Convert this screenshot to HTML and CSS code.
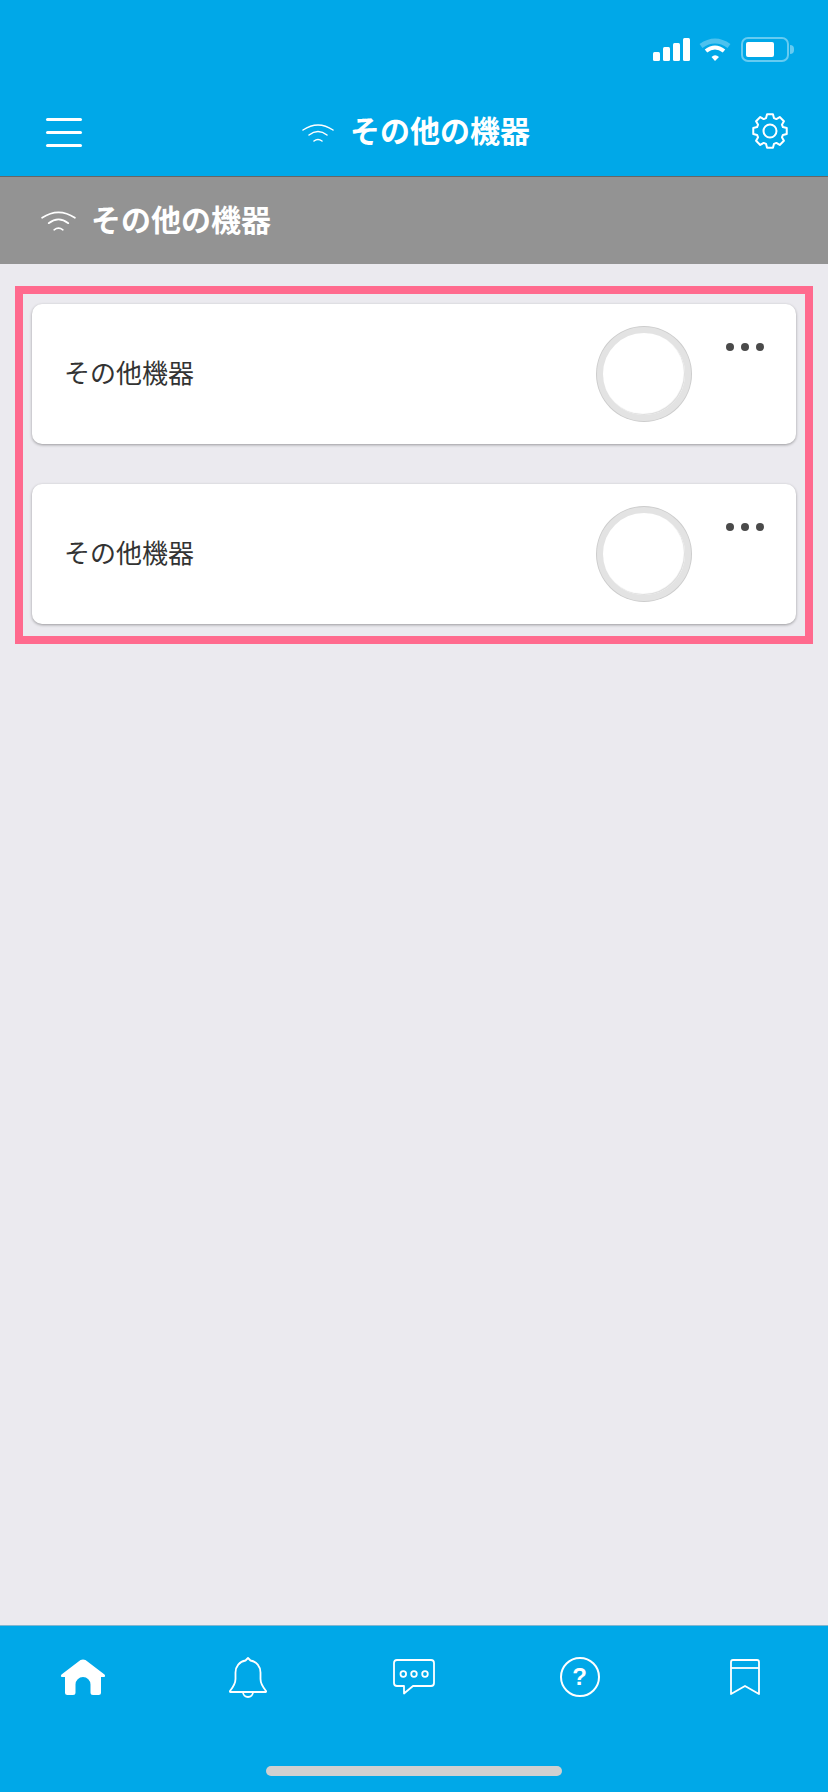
FILE: index.html
```html
<!DOCTYPE html>
<html lang="ja">
<head>
    <meta charset="UTF-8">
    <title>その他の機器</title>
    <link rel="stylesheet" href="styles.css">
</head>
<body>
    <header class="topbar">
        <div class="status">
            <svg class="signal" width="37" height="23" viewBox="0 0 37 23">
                <rect x="0" y="14" width="7" height="9" rx="1.5"/>
                <rect x="10" y="9" width="7" height="14" rx="1.5"/>
                <rect x="20" y="5" width="7" height="18" rx="1.5"/>
                <rect x="30" y="0" width="7" height="23" rx="1.5"/>
            </svg>
            <svg class="wifi-status" width="32" height="24" viewBox="0 0 32 24">
                <path class="wifi-faint" d="M2 9 Q16 -1 30 9"/>
                <path class="wifi-mid" d="M7 14 Q16 7 25 14"/>
                <path class="wifi-tip" d="M12.5 20 Q16 16.500 20 20 L16 24 Z"/>
            </svg>
            <div class="battery">
                <div class="battery-body"><div class="battery-fill"></div></div>
                <div class="battery-cap"></div>
            </div>
        </div>
        <nav class="nav">
            <div class="burger"><span></span><span></span><span></span></div>
            <div class="nav-title">
                <svg class="wifi-line" width="32" height="19" viewBox="0 0 32 19">
                    <path d="M1 7 Q16 -3 31 7"/>
                    <path d="M7 12 Q16 5 25 12"/>
                    <path d="M12 18 Q16 15 20 18"/>
                </svg>
                <h1>その他の機器</h1>
            </div>
            <svg class="gear" width="36" height="36" viewBox="-18 -18 36 36">
                <polygon points="-3.95,-12.91 -2.95,-16.74 2.95,-16.74 3.95,-12.91 6.34,-11.92 9.75,-13.92 13.92,-9.75 11.92,-6.34 12.91,-3.95 16.74,-2.95 16.74,2.95 12.91,3.95 11.92,6.34 13.92,9.75 9.75,13.92 6.34,11.92 3.95,12.91 2.95,16.74 -2.95,16.74 -3.95,12.91 -6.34,11.92 -9.75,13.92 -13.92,9.75 -11.92,6.34 -12.91,3.95 -16.74,2.95 -16.74,-2.95 -12.91,-3.95 -11.92,-6.34 -13.92,-9.75 -9.75,-13.92 -6.34,-11.92"/>
                <circle r="6.5"/>
            </svg>
        </nav>
    </header>

    <div class="subbar">
        <svg class="wifi-line" width="35" height="21" viewBox="0 0 32 19">
            <path d="M1 7 Q16 -3 31 7"/>
            <path d="M7 12 Q16 5 25 12"/>
            <path d="M12 18 Q16 15 20 18"/>
        </svg>
        <h2>その他の機器</h2>
    </div>

    <main class="content">
        <div class="highlight">
            <div class="card">
                <p class="card-name">その他機器</p>
                <div class="ring"></div>
                <div class="dots"><span></span><span></span><span></span></div>
            </div>
            <div class="card">
                <p class="card-name">その他機器</p>
                <div class="ring"></div>
                <div class="dots"><span></span><span></span><span></span></div>
            </div>
        </div>
    </main>

    <footer class="tabbar">
        <div class="tabs">
            <svg class="tab-fill" width="46" height="37" viewBox="0 0 46 37">
                <path d="M20.500 1 Q23 0 25.500 1 L44.500 15.500 Q46 17.500 44 18 H41 V33.500 Q41 36 38.500 36 H33 Q30.500 36 30.500 33.500 V25.500 A7.500 7.500 0 0 0 15.500 25.500 V33.500 Q15.500 36 13 36 H7.500 Q5 36 5 33.500 V18 H2 Q0 17.500 1.500 15.500 Z"/>
            </svg>
            <svg class="tab-line" width="38" height="41" viewBox="0 0 38 41">
                <path d="M19 1 L21.500 3.500 C27.500 4.500 31.500 9.500 31.500 15.500 V22 C31.500 26 33 29 37 34 Q37.500 35 36 35 H2 Q0.500 35 1 34 C5 29 6.500 26 6.500 22 V15.500 C6.500 9.500 10.500 4.500 16.500 3.500 Z"/>
                <path d="M14 35 A5 5 0 0 0 24 35"/>
            </svg>
            <svg class="tab-line" width="42" height="36" viewBox="0 0 42 36">
                <path d="M4 1 H38 Q41 1 41 4 V24 Q41 27 38 27 H20 L11 34.500 V27 H4 Q1 27 1 24 V4 Q1 1 4 1 Z"/>
                <circle cx="10.300" cy="15" r="2.800"/>
                <circle cx="21" cy="15" r="2.800"/>
                <circle cx="32" cy="15" r="2.800"/>
            </svg>
            <div class="help">?</div>
            <svg class="tab-line" width="30" height="36" viewBox="0 0 30 36">
                <path d="M1 3 Q1 1 3 1 H27 Q29 1 29 3 V35 L15 27 L1 35 Z"/>
                <path d="M1 9 H29"/>
            </svg>
        </div>
        <div class="home-indicator"></div>
    </footer>
</body>
</html>
```

FILE: styles.css
```css
* {
    box-sizing: border-box;
}

body {
    margin: 0;
    height: 1792px;
    display: flex;
    flex-direction: column;
    background-color: #ebeaef;
    font-family: "Noto Sans CJK JP", "Noto Sans", sans-serif;
}

.topbar {
    background-color: #00a8e8;
}

.status {
    height: 88px;
    padding: 0 34px 26px 0;
    display: flex;
    justify-content: flex-end;
    align-items: flex-end;
}

.signal {
    fill: #fff;
    margin-bottom: 1px;
}

.wifi-status {
    margin-left: 9px;
    margin-bottom: 1px;
}

.wifi-faint {
    fill: none;
    stroke: #fff;
    stroke-opacity: 0.3;
    stroke-width: 5;
}

.wifi-mid {
    fill: none;
    stroke: #fff;
    stroke-width: 4;
}

.wifi-tip {
    fill: #fff;
}

.battery {
    margin-left: 10px;
    display: flex;
    align-items: center;
}

.battery-body {
    width: 48px;
    height: 25px;
    padding: 3px;
    border: 2px solid rgba(255, 255, 255, 0.4);
    border-radius: 7px;
}

.battery-fill {
    width: 28px;
    height: 100%;
    background-color: #fff;
    border-radius: 2px;
}

.battery-cap {
    width: 4px;
    height: 9px;
    margin-left: 1px;
    background-color: rgba(255, 255, 255, 0.4);
    border-radius: 0 4px 4px 0;
}

.nav {
    height: 88px;
    padding: 0 40px 0 46px;
    display: flex;
    justify-content: space-between;
    align-items: center;
}

.burger {
    width: 36px;
    display: flex;
    flex-direction: column;
    gap: 10px;
}

.burger span {
    height: 3px;
    background-color: #fff;
    border-radius: 2px;
}

.nav-title {
    margin-right: 2px;
    display: flex;
    align-items: center;
    gap: 16px;
}

.nav-title h1,
.subbar h2 {
    margin: 0 0 6px;
    color: #fff;
    font-size: 30px;
    line-height: 44px;
    font-weight: 700;
    white-space: nowrap;
}

.wifi-line path {
    fill: none;
    stroke: #fff;
    stroke-width: 1.500;
    stroke-linecap: round;
}

.gear {
    margin-bottom: 2px;
    fill: none;
    stroke: #fff;
    stroke-width: 2;
    stroke-linejoin: round;
}

.subbar {
    height: 88px;
    padding-left: 41px;
    display: flex;
    align-items: center;
    gap: 15px;
    background-color: #939393;
    border-top: 1px solid #666;
}

.content {
    flex: 1;
    padding: 22px 15px 0;
}

.highlight {
    padding: 10px 9px 12px;
    display: flex;
    flex-direction: column;
    gap: 40px;
    border: 8px solid #ff6a8e;
}

.card {
    height: 140px;
    padding-left: 32px;
    display: flex;
    align-items: center;
    background-color: #fff;
    border-radius: 10px;
    box-shadow: 0 1px 3px rgba(0, 0, 0, 0.35);
}

.card-name {
    flex: 1;
    margin: 0 0 5px;
    color: #333;
    font-size: 26px;
}

.ring {
    width: 94px;
    height: 94px;
    margin: 1px;
    border: 6px solid #e3e3e3;
    border-radius: 50%;
    box-shadow: 0 0 0 1px #cdcdcd, -1px -1px 1px #dcdcdc inset;
    background-color: #fff;
}

.dots {
    align-self: flex-start;
    width: 104px;
    margin-top: 39px;
    padding-left: 34px;
    display: flex;
    gap: 7px;
}

.dots span {
    width: 8px;
    height: 8px;
    background-color: #4a4a4a;
    border-radius: 50%;
}

.tabbar {
    height: 167px;
    background-color: #00a8e8;
    border-top: 1px solid #7fb6d0;
}

.tabs {
    height: 102px;
    display: grid;
    grid-template-columns: repeat(5, 1fr);
    justify-items: center;
    align-items: center;
}

.tab-fill {
    fill: #fff;
}

.tab-line {
    fill: none;
    stroke: #fff;
    stroke-width: 1.800;
    stroke-linejoin: round;
}

.help {
    width: 40px;
    height: 40px;
    display: flex;
    justify-content: center;
    align-items: center;
    border: 2px solid #fff;
    border-radius: 50%;
    color: #fff;
    font-family: "Liberation Sans", sans-serif;
    font-size: 24px;
    font-weight: 700;
}

.home-indicator {
    width: 296px;
    height: 10px;
    margin: 38px auto 0;
    background-color: #d0d0d0;
    border-radius: 5px;
}
```
